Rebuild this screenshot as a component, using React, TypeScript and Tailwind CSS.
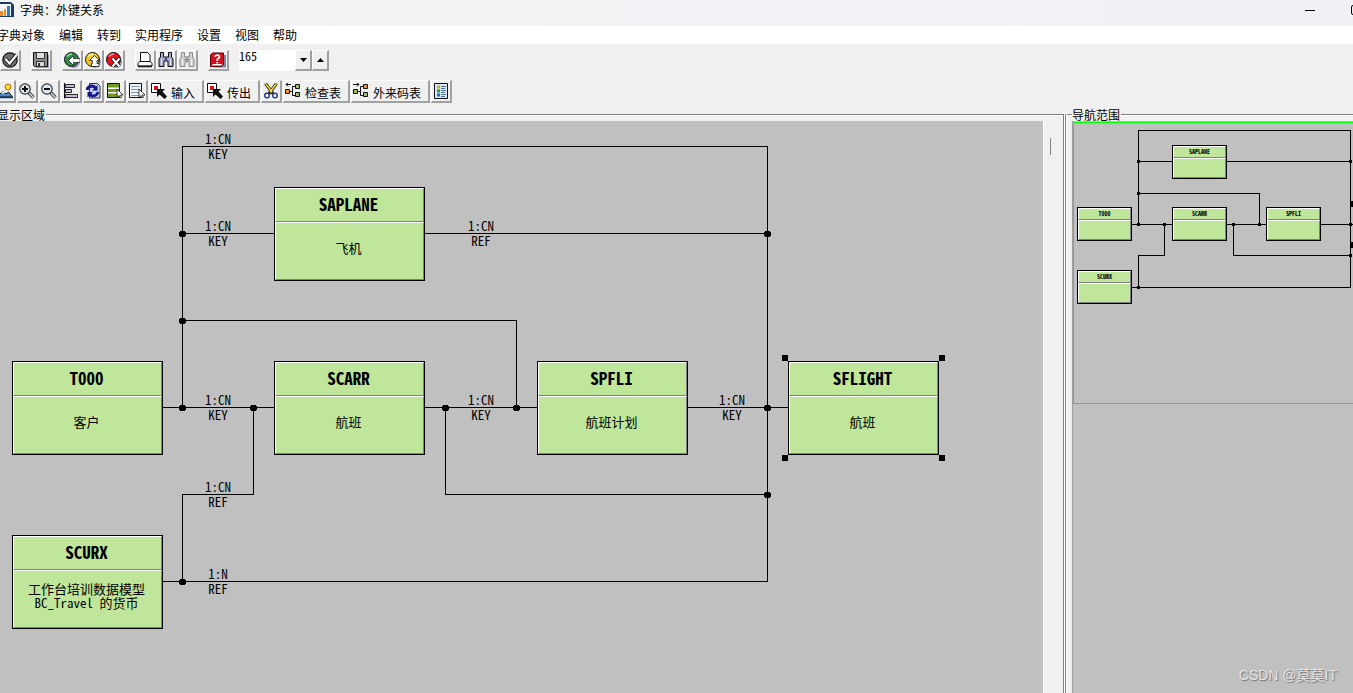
import type { ReactNode } from "react";
import clsx from "clsx";

type IconName = keyof typeof icons;

interface TableNode {
  name: string;
  text: string[];
  x: number;
  y: number;
  selected?: boolean;
}

interface Point {
  x: number;
  y: number;
}

// 16x16 toolbar glyphs
const icons = {
  check: (
    <>
      <circle cx="8" cy="8" r="7.2" fill="#6e6e6e" stroke="#111" strokeWidth="1.2" />
      <path d="M3.5 7l4 4.5L15 2.500" fill="none" stroke="#111" strokeWidth="4" />
      <path d="M3.500 7l4 4.500L15 2.500" fill="none" stroke="#fff" strokeWidth="2.200" />
    </>
  ),
  save: (
    <>
      <path d="M3 3h13v13H3z" fill="#9a9cae" />
      <path d="M.5 .5h14v14H1.500l-1-1z" fill="#8d8d8d" stroke="#111" />
      <path d="M3.500 .5h8v6h-8z" fill="#e0e0e0" stroke="#333" />
      <path d="M3.500 9.500h8v5h-8z" fill="#d8d8d8" stroke="#333" />
      <path d="M5 11h2v3H5z" fill="#333" />
    </>
  ),
  back: (
    <>
      <circle cx="10" cy="10" r="6" fill="#9a9cc8" />
      <circle cx="7.500" cy="7.500" r="7" fill="#2f8a4a" stroke="#111" />
      <path d="M3 4.500q2-2.500 5-2.500" fill="none" stroke="#9be0a5" strokeWidth="1.500" />
      <path d="M4.500 8.500l5-5v3H16v4H9.500v3z" fill="#fff" stroke="#111" strokeWidth=".7" />
    </>
  ),
  exit: (
    <>
      <circle cx="10" cy="10" r="6" fill="#9a9cc8" />
      <circle cx="7.500" cy="7.500" r="7" fill="#f7c51c" stroke="#111" />
      <path d="M3 4.500q2-2.500 5-2.500" fill="none" stroke="#fff3a0" strokeWidth="1.500" />
      <path d="M9.500 3.500l5 5H12v3h2v3H6.500v-3h.8v-3H4.500z" fill="#fff" stroke="#111" strokeWidth=".8" />
    </>
  ),
  cancel: (
    <>
      <circle cx="10" cy="10" r="6" fill="#9a9cc8" />
      <circle cx="7.500" cy="7.500" r="7" fill="#e0141c" stroke="#111" />
      <path d="M3 4.500q2-2.500 5-2.500" fill="none" stroke="#ff9a9a" strokeWidth="1.500" />
      <path d="M6.500 6.500l7 8M13.500 6.500l-7 8" stroke="#111" strokeWidth="3.500" />
      <path d="M6.500 6.500l7 8M13.500 6.500l-7 8" stroke="#fff" strokeWidth="2" />
    </>
  ),
  print: (
    <>
      <path d="M3.500 .5h7l2.500 2.500v7H3.500z" fill="#fff" stroke="#111" />
      <path d="M2.500 9.500h11l1.500 2v2.500H1v-2.500z" fill="#fff" stroke="#111" />
      <path d="M1 14.500h14" stroke="#111" strokeWidth="1.500" />
    </>
  ),
  find: (
    <>
      <path d="M2.500 .5h3V5h5V.5h3V5l1.500 2v7.500h-5V9h-4v5.500H1V7l1.500-2z" fill="#a3a9cf" stroke="#111" />
      <path d="M3.500 7v6M12.500 7v6" stroke="#e6e8f8" />
      <path d="M7 5.500h2v3H7z" fill="#444b80" />
    </>
  ),
  findNext: (
    <>
      <path d="M2.500 .5h3V5h5V.5h3V5l1.500 2v7.500h-5V9h-4v5.500H1V7l1.500-2z" fill="#d2d2d2" stroke="#8a8a8a" />
      <path d="M8 4v7M5 7.500h6" stroke="#888" />
      <path d="M3.500 7v6M12.500 7v6" stroke="#f4f4f4" />
    </>
  ),
  help: (
    <>
      <path d="M4 3h12v12.500H4z" fill="#7785a0" />
      <path d="M.5 3l2-2h11v11.500l-2 2H.5z" fill="#d4101c" stroke="#5c0008" />
      <path d="M1.500 13.500h9.500l1.500-1.500H3z" fill="#fff" />
      <path d="M5 4.800q0-1.600 2.200-1.600T9.500 5q0 1.300-2.200 2.300V9" fill="none" stroke="#fff" strokeWidth="1.700" />
      <path d="M6.400 10h1.800v1.500H6.400z" fill="#fff" />
    </>
  ),
  picture: (
    <>
      <circle cx="11" cy="4" r="3" fill="#ffd83a" stroke="#a66a00" />
      <path d="M0 14l6-6 3 3 2.500-2 4 5z" fill="#4c86c4" stroke="#111" />
      <path d="M4.300 9.700L6 8l2 1.700-2 1z" fill="#fff" />
      <path d="M0 14.500h16" stroke="#123a70" strokeWidth="1.500" />
    </>
  ),
  zoomIn: (
    <>
      <path d="M9.500 9.500l5 5" stroke="#444" strokeWidth="3.500" />
      <path d="M10 10l4.500 4.500" stroke="#d4d8e8" strokeWidth="1.500" />
      <circle cx="6" cy="6" r="5.200" fill="#dfe9f2" stroke="#333" strokeWidth="1.200" />
      <path d="M3 6h6M6 3v6" stroke="#111" strokeWidth="2" />
    </>
  ),
  zoomOut: (
    <>
      <path d="M9.500 9.500l5 5" stroke="#444" strokeWidth="3.500" />
      <path d="M10 10l4.500 4.500" stroke="#d4d8e8" strokeWidth="1.500" />
      <circle cx="6" cy="6" r="5.200" fill="#dfe9f2" stroke="#333" strokeWidth="1.200" />
      <path d="M3 6h6" stroke="#111" strokeWidth="2" />
    </>
  ),
  align: (
    <>
      <path d="M1.500 0v15.500" stroke="#111" />
      <path d="M2.500 1.500h9v3h-9zM2.500 6.500h6v3h-6zM2.500 11.500h12v3h-12z" fill="#cbb8d8" stroke="#222" />
    </>
  ),
  refresh: (
    <>
      <path d="M4.500 .5h8l2.500 2.500v12H4.500z" fill="#c5d3ea" stroke="#333" />
      <path d="M2 7q1-4 5.500-4l3 1.500" fill="none" stroke="#15158c" strokeWidth="2.800" />
      <path d="M13 9q-1 4-5.500 4l-3-1.500" fill="none" stroke="#15158c" strokeWidth="2.800" />
      <path d="M12.500 2v5.500H7zM2.500 14.500V9H8z" fill="#15158c" />
    </>
  ),
  rows: (
    <>
      <path d="M.5 .5h12v14H.5z" fill="#fff" stroke="#111" />
      <path d="M1 1h11v3.500H1zM1 6h11v3H1zM1 10.500h11V14H1z" fill="#6f9a1d" />
      <path d="M10 6v8.500l2-2 1 2.500 1.500-.8-1-2.200h2.500z" fill="#fff" stroke="#111" strokeWidth=".8" />
    </>
  ),
  list: (
    <>
      <path d="M.5 .5h12v14H.5z" fill="#eef4fa" stroke="#111" />
      <path d="M2 3.500h9M2 6.500h9M2 9.500h9M2 12.500h9" stroke="#7e98ae" />
      <path d="M10 6v8.500l2-2 1 2.500 1.500-.8-1-2.200h2.500z" fill="#fff" stroke="#111" strokeWidth=".8" />
    </>
  ),
  select: (
    <>
      <path d="M.5 .5h9v9h-9z" fill="#fff" stroke="#111" />
      <path d="M3 3h4v4H3z" fill="#e01010" />
      <path d="M6 6h8l-2.500 2.500 4.500 5-2.500 2.500-5-4.500L6 14z" fill="#111" />
    </>
  ),
  cut: (
    <>
      <path d="M2.500 .5l7.500 10M13.500 .5L6 10.500" stroke="#111" strokeWidth="3" />
      <path d="M2.700 .8l6.500 8.500M13.300 .8L6.800 9.300" stroke="#ffe23a" strokeWidth="1.500" />
      <circle cx="4" cy="12.500" r="2.300" fill="#fff" stroke="#2a3b90" strokeWidth="1.500" />
      <circle cx="12" cy="12.500" r="2.300" fill="#fff" stroke="#2a3b90" strokeWidth="1.500" />
    </>
  ),
  checkTable: (
    <>
      <path d="M5 8.500h3M7.500 3.500v9H10M7.500 3.500H10M6 1.500H1M3 0L1 1.500 3 3.500" fill="none" stroke="#111" />
      <path d="M.5 6.500h4v4h-4z" fill="#f39a1e" stroke="#111" />
      <path d="M10.500 1.500h4v4h-4zM10.500 9.500h4v4h-4z" fill="#9cc45a" stroke="#111" />
    </>
  ),
  foreignTable: (
    <>
      <path d="M5 8.500h3M7.500 3.500v9H10M7.500 3.500H10M0 1.500h6M4 0l2 1.500-2 2" fill="none" stroke="#111" />
      <path d="M.5 6.500h4v4h-4zM10.500 9.500h4v4h-4z" fill="#9cc45a" stroke="#111" />
      <path d="M10.500 1.500h4v4h-4z" fill="#f39a1e" stroke="#111" />
    </>
  ),
  legend: (
    <>
      <path d="M1.500 .5h13v15h-13z" fill="#d8e8f8" stroke="#111" />
      <path d="M4 2.500h3v3H4z" fill="#c6b400" />
      <path d="M4 6.500h3v3H4z" fill="#1f9a40" />
      <path d="M4 10.500h3v3H4z" fill="#2668c8" />
      <path d="M8 3.500h5M8 5.500h4M8 7.500h5M8 9.500h4M8 11.500h5M8 13.500h4" stroke="#54718c" />
    </>
  ),
};

const menus = ["字典对象", "编辑", "转到", "实用程序", "设置", "视图", "帮助"];

// groups of buttons in the standard toolbar
const systemGroups: { icon: IconName; label: string }[][] = [
  [{ icon: "check", label: "回车" }],
  [{ icon: "save", label: "保存" }],
  [
    { icon: "back", label: "返回" },
    { icon: "exit", label: "退出" },
    { icon: "cancel", label: "取消" },
  ],
  [
    { icon: "print", label: "打印" },
    { icon: "find", label: "查找" },
    { icon: "findNext", label: "查找下一个" },
  ],
  [{ icon: "help", label: "帮助" }],
];

const appButtons: { icon: IconName; label: string; text?: string }[] = [
  { icon: "picture", label: "总览" },
  { icon: "zoomIn", label: "放大" },
  { icon: "zoomOut", label: "缩小" },
  { icon: "align", label: "对齐" },
  { icon: "refresh", label: "刷新" },
  { icon: "rows", label: "选择行" },
  { icon: "list", label: "列表" },
  { icon: "select", label: "输入", text: "输入" },
  { icon: "select", label: "传出", text: "传出" },
  { icon: "cut", label: "剪切" },
  { icon: "checkTable", label: "检查表", text: "检查表" },
  { icon: "foreignTable", label: "外来码表", text: "外来码表" },
  { icon: "legend", label: "图例" },
];

// diagram coordinates are relative to the canvas
const nodes: TableNode[] = [
  { name: "SAPLANE", text: ["飞机"], x: 274, y: 66 },
  { name: "T000", text: ["客户"], x: 12, y: 240 },
  { name: "SCARR", text: ["航班"], x: 274, y: 240 },
  { name: "SPFLI", text: ["航班计划"], x: 537, y: 240 },
  { name: "SFLIGHT", text: ["航班"], x: 788, y: 240, selected: true },
  { name: "SCURX", text: ["工作台培训数据模型", "BC_Travel 的货币"], x: 12, y: 414 },
];

const relations = [
  { card: "1:CN", kind: "KEY", x: 218, y: 10 },
  { card: "1:CN", kind: "KEY", x: 218, y: 97 },
  { card: "1:CN", kind: "REF", x: 481, y: 97 },
  { card: "1:CN", kind: "KEY", x: 218, y: 271 },
  { card: "1:CN", kind: "KEY", x: 481, y: 271 },
  { card: "1:CN", kind: "KEY", x: 732, y: 271 },
  { card: "1:CN", kind: "REF", x: 218, y: 358 },
  { card: "1:N", kind: "REF", x: 218, y: 445 },
];

const links =
  "M182.5 286.5V25.5H767.5V460.5H163M182.5 112.5H274M425 112.5H767M182 199.5H516.5V286M163 286.5H274M425 286.5H537M688 286.5H788M253.5 286V373.5H182.5V460M445.5 286V373.5H767";

const dots: Point[] = [
  { x: 182, y: 112 },
  { x: 767, y: 112 },
  { x: 182, y: 199 },
  { x: 182, y: 286 },
  { x: 253, y: 286 },
  { x: 445, y: 286 },
  { x: 516, y: 286 },
  { x: 767, y: 286 },
  { x: 767, y: 373 },
  { x: 182, y: 460 },
];

// navigation overview, same model at about a third of the size
const miniNodes: { name: string; x: number; y: number }[] = [
  { name: "SAPLANE", x: 99, y: 23 },
  { name: "T000", x: 4, y: 85 },
  { name: "SCARR", x: 99, y: 85 },
  { name: "SPFLI", x: 193, y: 85 },
  { name: "SCURX", x: 4, y: 148 },
];

const miniLinks =
  "M65.5 102V8.5H277.5V165.500H59M65 39.5H99M154 39.5H277M65 71.5H186.5V102M59 102.5H99M154 102.5H193M248 102.5H281M91.5 102V133.5H65.5V165M160.500 102V133.5H277";

const miniDots: Point[] = [
  { x: 65, y: 39 },
  { x: 277, y: 39 },
  { x: 65, y: 71 },
  { x: 65, y: 102 },
  { x: 91, y: 102 },
  { x: 160, y: 102 },
  { x: 186, y: 102 },
  { x: 277, y: 102 },
  { x: 277, y: 133 },
  { x: 65, y: 165 },
];

function Icon({ name }: { name: IconName }) {
  return (
    <svg viewBox="0 0 16 16" className="size-4 shrink-0" aria-hidden="true">
      {icons[name]}
    </svg>
  );
}

function ToolButton({ label, className, children }: { label: string; className?: string; children: ReactNode }) {
  return (
    <button
      type="button"
      aria-label={label}
      className={clsx(
        "flex shrink-0 items-center border-t border-r-2 border-b-2 border-l border-t-white border-r-[#a0a0a0] border-b-[#a0a0a0] border-l-white bg-[#f0f0f0] px-px",
        className
      )}
    >
      {children}
    </button>
  );
}

function TitleBar() {
  return (
    <header className="flex h-[26px] shrink-0 items-start bg-linear-to-r from-[#f3f3f3] to-[#eff1f7]">
      <svg viewBox="0 0 16 16" className="mt-0.5 -ml-0.5 size-4" aria-hidden="true">
        <path d="M1 0h12l3 3v12H1z" fill="#1d3a66" />
        <path d="M2 2h11v12H2z" fill="#f4f8fc" />
        <path d="M2 9h3v5H2zM6 7h2v7H6z" fill="#f08a24" />
        <path d="M9 4h3v10H9z" fill="#2f7cc4" />
      </svg>
      <h1 className="ml-1.5 flex-1 text-xs leading-5">字典：外键关系</h1>
      <div className="-mr-2 flex h-5 items-center gap-9">
        <button type="button" aria-label="最小化" className="flex h-5 w-2.5 items-center">
          <span className="h-px w-2.5 bg-black" />
        </button>
        <button type="button" aria-label="最大化" className="size-2.5 rounded-xs border border-black" />
      </div>
    </header>
  );
}

function PanelHeading({ title, className }: { title: string; className?: string }) {
  return (
    <div className={clsx("flex h-[13px] shrink-0 overflow-hidden", className)}>
      <h2 className="-mt-0.5 h-[18px] shrink-0 text-xs leading-[18px]">{title}</h2>
      <div className="mt-1.5 ml-px h-0.5 flex-1 border-t border-t-[#808080] bg-white" />
    </div>
  );
}

function NodeBox({ node }: { node: TableNode }) {
  return (
    <div className="absolute" style={{ left: node.x, top: node.y }}>
      <div className="flex h-[94px] w-[151px] flex-col border border-black bg-[#bfe69a]">
        <div className="flex h-[34px] items-center justify-center border-t border-r border-b border-l border-t-white border-r-[#808080] border-b-[#808080] border-l-white pr-0.5 pb-0.5 text-[17px] leading-5 font-bold">
          {node.name}
        </div>
        <div className="flex flex-1 flex-col items-center justify-center border-t border-r border-b border-l border-t-white border-r-[#808080] border-b-[#808080] border-l-white pr-0.5 pb-1.5 text-[13px] leading-[14px]">
          {node.text.map((line) => (
            <span key={line} className="whitespace-pre">
              {line}
            </span>
          ))}
        </div>
      </div>
      {node.selected && (
        <>
          <span className="absolute -top-1.5 -left-1.5 size-1.5 bg-black" />
          <span className="absolute -top-1.5 -right-1.5 size-1.5 bg-black" />
          <span className="absolute -bottom-1.5 -left-1.5 size-1.5 bg-black" />
          <span className="absolute -right-1.5 -bottom-1.5 size-1.5 bg-black" />
        </>
      )}
    </div>
  );
}

function Diagram() {
  return (
    <div className="relative min-w-0 flex-1 overflow-hidden bg-[#c0c0c0] [font-feature-settings:'hwid']">
      <svg width="960" height="520" className="absolute top-0 left-0" shapeRendering="crispEdges" aria-hidden="true">
        <path d={links} fill="none" stroke="#000" />
        {dots.map((dot) => (
          <path key={`${dot.x}-${dot.y}`} d={`M${dot.x - 2} ${dot.y - 2}h5v1h1v4h-1v1h-5v-1h-1v-4h1z`} />
        ))}
      </svg>
      {relations.map((rel) => (
        <div
          key={`${rel.x}-${rel.y}`}
          className="absolute flex w-10 -translate-x-1/2 flex-col items-center text-[13px] leading-[15px]"
          style={{ left: rel.x, top: rel.y }}
        >
          <span>{rel.card}</span>
          <span>{rel.kind}</span>
        </div>
      ))}
      {nodes.map((node) => (
        <NodeBox key={node.name} node={node} />
      ))}
    </div>
  );
}

function Navigator() {
  return (
    <div className="ml-[5px] flex-1 overflow-hidden border-l border-l-[#a0a0a0] bg-[#c0c0c0]">
      <div className="relative mt-px h-[282px] overflow-hidden border-t border-b border-l border-[#00ff00] [font-feature-settings:'hwid']">
        <svg width="281" height="200" className="absolute -top-px -left-px" shapeRendering="crispEdges" aria-hidden="true">
          <path d={miniLinks} fill="none" stroke="#000" />
          {miniDots.map((dot) => (
            <path key={`${dot.x}-${dot.y}`} d={`M${dot.x - 1} ${dot.y - 1}h3v3h-3z`} />
          ))}
          <path d="M278 79h6v6h-6zM278 120h6v6h-6z" />
        </svg>
        {miniNodes.map((node) => (
          <div
            key={node.name}
            className="absolute -mt-px -ml-px h-[34px] w-[55px] border border-black bg-[#bfe69a]"
            style={{ left: node.x, top: node.y }}
          >
            <div className="h-3 border-t border-r border-b border-l border-t-white border-r-[#808080] border-b-[#808080] border-l-white text-center text-[6px] leading-[10px] font-bold">
              {node.name}
            </div>
            <div className="h-5 border-t border-r border-b border-l border-t-white border-r-[#808080] border-b-[#808080] border-l-white" />
          </div>
        ))}
      </div>
    </div>
  );
}

export default function App() {
  return (
    <div className="flex h-screen flex-col overflow-hidden bg-[#f0f0f0] font-['Noto_Sans_CJK_SC',sans-serif] text-black">
      <TitleBar />
      <nav className="-ml-[3px] flex h-[18px] shrink-0 gap-3.5 bg-white text-xs leading-[18px]">
        {menus.map((menu) => (
          <button key={menu} type="button">
            {menu}
          </button>
        ))}
      </nav>

      <div className="flex h-8 shrink-0 gap-2.5 pt-1.5">
        {systemGroups.map((group) => (
          <div key={group[0].icon} className="flex">
            {group.map((item) => (
              <ToolButton key={item.icon} label={item.label} className="h-[21px]">
                <Icon name={item.icon} />
              </ToolButton>
            ))}
          </div>
        ))}
        <div className="flex h-[21px]">
          <input
            aria-label="缩放比例"
            defaultValue="165"
            className="h-[21px] w-14 bg-white pb-2.5 text-xs leading-3 outline-none [font-feature-settings:'hwid']"
          />
          <ToolButton label="减小" className="w-[17px] justify-center border-r-[#707070] border-b-[#707070]">
            <svg viewBox="0 0 7 4" className="h-1 w-[7px]" aria-hidden="true">
              <path d="M0 0h7L3.5 4z" />
            </svg>
          </ToolButton>
          <ToolButton label="增大" className="w-[17px] justify-center border-r-[#707070] border-b-[#707070]">
            <svg viewBox="0 0 7 4" className="h-1 w-[7px]" aria-hidden="true">
              <path d="M0 4h7L3.500 0z" />
            </svg>
          </ToolButton>
        </div>
      </div>

      <div className="-ml-[5px] flex h-8 shrink-0 gap-px pt-1">
        {appButtons.map((item) => (
          <ToolButton key={item.label} label={item.label} className="h-[23px] pb-px">
            <Icon name={item.icon} />
            {item.text && <span className="mt-1 mr-1.5 ml-1 text-xs leading-4">{item.text}</span>}
          </ToolButton>
        ))}
      </div>

      <main className="flex min-h-0 flex-1">
        <section className="flex min-w-0 flex-1 flex-col">
          <PanelHeading title="显示区域" className="-ml-[3px]" />
          <div className="flex min-h-0 flex-1">
            <Diagram />
            <div className="w-5 border-l border-l-white pt-[17px]">
              <div className="ml-1.5 h-[17px] w-px bg-[#808080]" />
            </div>
          </div>
        </section>
        <div className="mt-1.5 flex w-1">
          <div className="w-px bg-[#808080]" />
          <div className="w-px bg-white" />
          <div className="w-px bg-[#808080]" />
          <div className="w-px bg-white" />
        </div>
        <section className="relative flex w-[286px] flex-col">
          <div className="flex">
            <div className="mt-1.5 h-0.5 w-[5px] border-t border-t-[#808080] bg-white" />
            <PanelHeading title="导航范围" className="flex-1" />
          </div>
          <Navigator />
          <p className="absolute right-4 bottom-2 font-['Liberation_Sans','Noto_Sans_CJK_SC',sans-serif] text-sm leading-5 text-[#e4e4e4] [text-shadow:1px_1px_1px_#707070]">
            CSDN @莫莫IT
          </p>
        </section>
      </main>
    </div>
  );
}
